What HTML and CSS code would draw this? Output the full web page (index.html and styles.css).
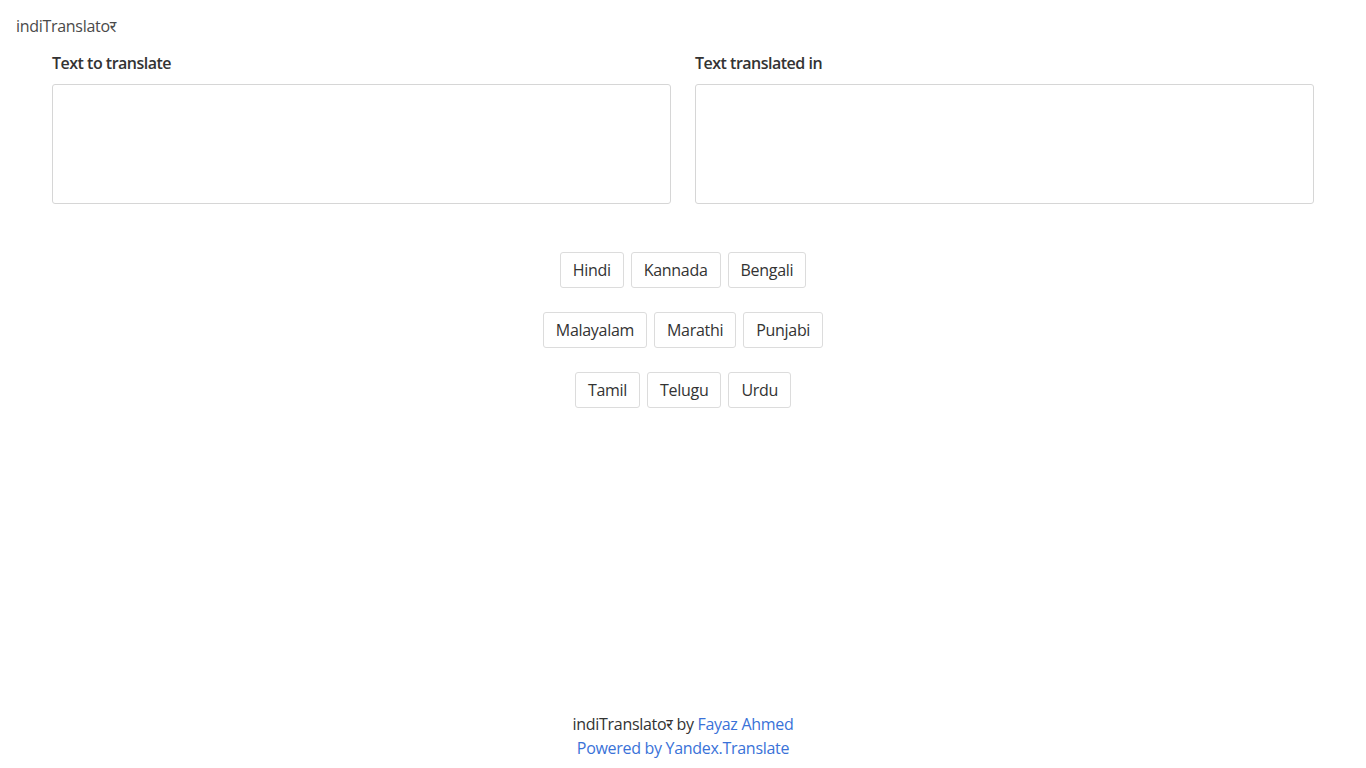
FILE: index.html
```html
<!DOCTYPE html>
<html lang="en">
<head>
<meta charset="utf-8">
<title>indiTranslator</title>
<link rel="stylesheet" href="styles.css">
</head>
<body>
<div class="page">
  <header class="brand">indiTranslato<span class="deva">र</span></header>
  <main class="main">
    <div class="panes">
      <div class="pane">
        <label class="label" for="src">Text to translate</label>
        <textarea id="src" class="box"></textarea>
      </div>
      <div class="pane">
        <label class="label" for="dst">Text translated in</label>
        <textarea id="dst" class="box"></textarea>
      </div>
    </div>
    <div class="langs">
      <div class="row">
        <button class="btn">Hindi</button>
        <button class="btn">Kannada</button>
        <button class="btn">Bengali</button>
      </div>
      <div class="row">
        <button class="btn">Malayalam</button>
        <button class="btn">Marathi</button>
        <button class="btn">Punjabi</button>
      </div>
      <div class="row">
        <button class="btn">Tamil</button>
        <button class="btn">Telugu</button>
        <button class="btn">Urdu</button>
      </div>
    </div>
  </main>
  <footer class="footer">
    <div>indiTranslato<span class="deva">र</span> by <a href="#">Fayaz Ahmed</a></div>
    <div><a href="#">Powered by Yandex.Translate</a></div>
  </footer>
</div>
</body>
</html>
```
FILE: styles.css
```css
html, body {
  margin: 0;
  padding: 0;
  background: #fff;
}
body {
  font-family: "Open Sans", "Noto Sans", "Noto Sans Devanagari", sans-serif;
  font-size: 16px;
  line-height: 24px;
  letter-spacing: -0.3px;
  color: #333;
}
.page {
  min-height: 100vh;
  display: flex;
  flex-direction: column;
  box-sizing: border-box;
  padding-bottom: 8px;
}
.brand {
  padding: 14px 16px 0;
  color: #4a4a4a;
  font-size: 16px;
  line-height: 24px;
}
.main {
  padding: 0 52px;
}
.panes {
  display: flex;
  gap: 24px;
  margin-top: 14px;
}
.pane {
  flex: 1;
  display: flex;
  flex-direction: column;
}
.label {
  font-weight: 600;
  font-size: 16px;
  line-height: 22px;
  letter-spacing: -0.5px;
  margin-bottom: 10px;
  color: #333;
}
.box {
  height: 120px;
  box-sizing: border-box;
  border: 1px solid #d6d6d6;
  border-radius: 3px;
  resize: none;
  font: inherit;
  padding: 6px 10px;
  outline: none;
}
.langs {
  margin-top: 48px;
  display: flex;
  flex-direction: column;
  align-items: center;
  gap: 24px;
}
.row {
  display: flex;
  gap: 7px;
  justify-content: center;
}
.btn {
  height: 36px;
  box-sizing: border-box;
  padding: 0 12px;
  background: #fff;
  border: 1px solid #dcdcdc;
  border-radius: 3px;
  font: inherit;
  letter-spacing: inherit;
  color: #333;
  cursor: pointer;
}
.footer {
  margin-top: auto;
  text-align: center;
  color: #333;
}
.footer a {
  color: #3a72d8;
  text-decoration: none;
}
```
